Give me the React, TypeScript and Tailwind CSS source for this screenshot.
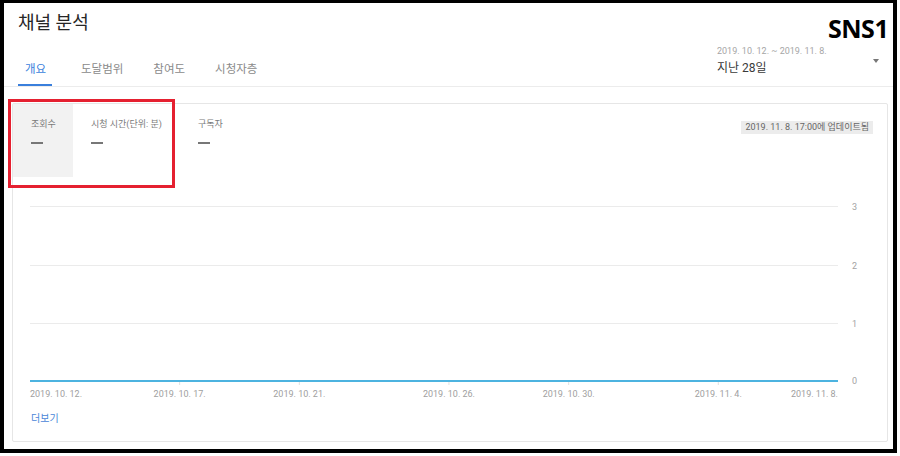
import React from 'react';

const tabs = [
  { label: '개요', active: true, className: 'w-[34px]' },
  { label: '도달범위', active: false, className: 'ml-[22px] pr-[5px]' },
  { label: '참여도', active: false, className: 'ml-[18px] pr-[5px]' },
  { label: '시청자층', active: false, className: 'ml-[18px] pr-[5px]' },
];

const metrics = [
  { label: '조회수', className: 'w-[60px] h-[73px] bg-[#f2f2f2]' },
  { label: '시청 시간(단위: 분)', className: 'w-[107px] h-[73px]' },
  { label: '구독자', className: 'w-[80px] h-[73px]' },
];

// x axis: 2019.10.12 -> 2019.11.8 (27 days)
const X0 = 17;
const X1 = 825;
const dayX = (d: number) => X0 + (d * (X1 - X0)) / 27;

const xLabels = [
  { day: 0, text: '2019. 10. 12.', anchor: 'start' },
  { day: 5, text: '2019. 10. 17.', anchor: 'middle' },
  { day: 9, text: '2019. 10. 21.', anchor: 'middle' },
  { day: 14, text: '2019. 10. 26.', anchor: 'middle' },
  { day: 18, text: '2019. 10. 30.', anchor: 'middle' },
  { day: 23, text: '2019. 11. 4.', anchor: 'middle' },
  { day: 27, text: '2019. 11. 8.', anchor: 'end' },
];

const yLines = [
  { y: 16.5, label: '3' },
  { y: 75.5, label: '2' },
  { y: 133.5, label: '1' },
];

const Chart: React.FC = () => (
  <svg width={874} height={212} className="mt-[13px] block font-['Roboto','Noto_Sans_CJK_KR',sans-serif]">
    {yLines.map(l => (
      <g key={l.label}>
        <line x1={X0} x2={X1} y1={l.y} y2={l.y} stroke="#ebebeb" strokeWidth={1} />
        <text x={839} y={l.y + 3} fontSize={9} fill="#a3a3a3">{l.label}</text>
      </g>
    ))}
    {xLabels.slice(1, -1).map(l => (
      <line key={l.day} x1={dayX(l.day)} x2={dayX(l.day)} y1={192} y2={195} stroke="#e0e0e0" strokeWidth={1} />
    ))}
    <line x1={X0} x2={X1} y1={191} y2={191} stroke="#4cb3e0" strokeWidth={2} />
    <text x={839} y={194} fontSize={9} fill="#a3a3a3">0</text>
    {xLabels.map(l => (
      <text
        key={l.text}
        x={dayX(l.day)}
        y={207}
        fontSize={9}
        fill="#a0a0a0"
        textAnchor={l.anchor as 'start' | 'middle' | 'end'}
      >
        {l.text}
      </text>
    ))}
  </svg>
);

export default function App() {
  return (
    <div className="relative w-[900px] h-[456px] bg-white font-['Roboto','Noto_Sans_CJK_KR',sans-serif]">
      <div className="w-[897px] h-[453px] border-[4px] border-t-[3px] border-black flex flex-col">
        {/* header */}
        <div className="flex justify-between border-b border-[#ececec]">
          <div className="pl-[14px] pt-[7px]">
            <h1 className="text-[18px] leading-[26px] text-[#262626]">채널 분석</h1>
            <div className="flex mt-[25px]">
              {tabs.map(t => (
                <div
                  key={t.label}
                  className={`pl-[7px] pb-[7px] text-[11.5px] leading-[16px] border-b-2 cursor-pointer ${t.className} ${
                    t.active ? 'text-[#3a7fdc] border-[#3a7fdc]' : 'text-[#8a8a8a] border-transparent'
                  }`}
                >
                  {t.label}
                </div>
              ))}
            </div>
          </div>
          <div className="pt-[42px] pr-[14px] flex items-start">
            <div className="flex items-center">
              <div className="w-[158px] pl-[2px]">
                <div className="text-[9px] leading-[12px] text-[#a6a6a6]">2019. 10. 12. ~ 2019. 11. 8.</div>
                <div className="mt-[3px] text-[12px] leading-[16px] text-[#3a3a3a]">지난 28일</div>
              </div>
              <div className="w-0 h-0 border-l-[3px] border-r-[3px] border-t-[4px] border-l-transparent border-r-transparent border-t-[#777]" />
            </div>
          </div>
        </div>

        {/* card */}
        <div className="flex-1 mt-[16px] ml-[8px] mr-[5px] mb-[7px] border border-[#e6e6e6] rounded-[2px] flex flex-col">
          <div className="flex items-start justify-between">
            <div className="flex">
              {metrics.map(m => (
                <div key={m.label} className={`pl-[18px] pt-[14px] ${m.className}`}>
                  <div className="text-[9px] leading-[12px] text-[#7a7a7a] whitespace-nowrap">{m.label}</div>
                  <div className="mt-[12px] w-[12px] h-[2px] bg-[#777]" />
                </div>
              ))}
            </div>
            <div className="mt-[17px] mr-[14px] bg-[#ececec] px-[4px] text-[9px] leading-[13px] text-[#666]">
              2019. 11. 8. 17:00에 업데이트됨
            </div>
          </div>
          <Chart />
          <div className="mt-[10px] pl-[18px] text-[10px] leading-[14px] text-[#4a86d8]">더보기</div>
        </div>
      </div>

      {/* annotations */}
      <div className="absolute left-[8px] top-[99px] w-[167px] h-[89px] border-[3px] border-[#e52030]" />
      <div className="absolute left-[828px] top-[16px] text-[25px] leading-none font-bold tracking-[-0.5px] text-black font-['Noto_Sans',sans-serif]">
        SNS1
      </div>
    </div>
  );
}
